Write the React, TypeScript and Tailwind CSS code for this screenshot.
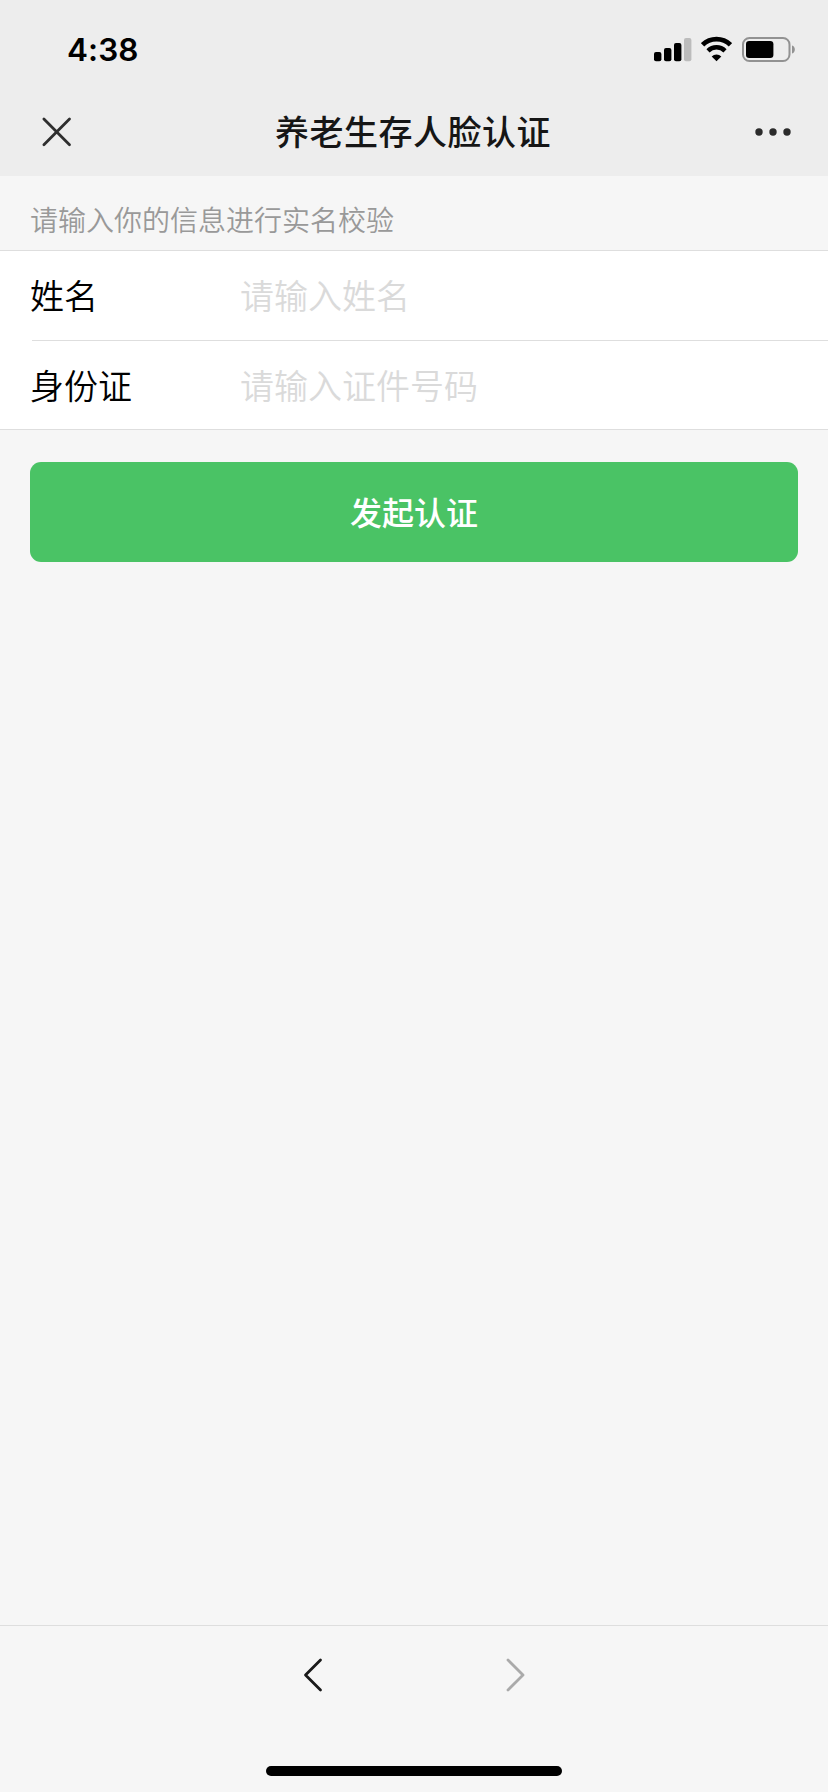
import React from "react";

interface IFormRowProps {
    label: string
    placeholder: string
    name: string
}

const StatusBar: React.FC = () => {
    return (
        <div className="flex h-[88px] items-start justify-between pl-[67px] pr-[32px]">
            <span className="pt-[31px] font-['Inter',sans-serif] text-[31.5px] leading-[38px] font-semibold tracking-[0.1px] text-black">4:38</span>
            <div className="flex items-center pt-[36px]">
                <svg width="38" height="28" viewBox="0 0 38 28">
                    <rect x="0" y="16" width="7.4" height="9.2" rx="2" fill="#000"/>
                    <rect x="10" y="12" width="7.4" height="13.2" rx="2" fill="#000"/>
                    <rect x="20" y="7" width="7.4" height="18.2" rx="2" fill="#000"/>
                    <rect x="30" y="2" width="7.4" height="23.2" rx="2" fill="#bcbcbc"/>
                </svg>
                <svg className="ml-[9px]" width="31" height="28" viewBox="0 0 31 28">
                    <path d="M1.6 8.8a20 20 0 0 1 27.8 0" fill="none" stroke="#000" strokeWidth="4.7"/>
                    <path d="M7 14.8a12.2 12.2 0 0 1 17 0" fill="none" stroke="#000" strokeWidth="4.5"/>
                    <path d="M15.5 25.2l-4.8-4.8a6.8 6.8 0 0 1 9.6 0z" fill="#000"/>
                </svg>
                <svg className="ml-[10px]" width="54" height="28" viewBox="0 0 54 28">
                    <rect x="1" y="2" width="46.5" height="23" rx="6.5" fill="none" stroke="#929292" strokeWidth="2"/>
                    <rect x="4" y="5" width="27.4" height="17" rx="3.2" fill="#000"/>
                    <path d="M50 9.5c3.8 1.1 3.8 6.9 0 8z" fill="#929292"/>
                </svg>
            </div>
        </div>
    )
}

const NavBar: React.FC = () => {
    return (
        <div className="flex h-[88px] items-center justify-between pl-[41px] pr-[36px]">
            <button aria-label="关闭">
                <svg width="31" height="31" viewBox="0 0 31 31">
                    <path d="M2.9 2.1l25.6 25.6M28.5 2.1L2.9 27.7" fill="none" stroke="#2e2e2e" strokeWidth="2.8" strokeLinecap="round"/>
                </svg>
            </button>
            <h1 className="pb-[3px] text-[34px] leading-[48px] font-medium tracking-[0.5px] text-[#161616]">养老生存人脸认证</h1>
            <button aria-label="更多">
                <svg width="38" height="10" viewBox="0 0 38 10">
                    <circle cx="5" cy="5" r="3.7" fill="#2b2b2b"/>
                    <circle cx="19" cy="5" r="3.7" fill="#2b2b2b"/>
                    <circle cx="33" cy="5" r="3.7" fill="#2b2b2b"/>
                </svg>
            </button>
        </div>
    )
}

const FormRow: React.FC<IFormRowProps> = ({ label, placeholder, name }) => {
    return (
        <label className="flex h-[88px] items-center pl-[30px]">
            <span className="w-[210px] text-[34px] leading-[48px] font-[350] text-black">{label}</span>
            <input name={name} placeholder={placeholder} className="h-[48px] flex-1 text-[34px] leading-[48px] font-[350] text-black outline-none placeholder:text-[#dadada]"/>
        </label>
    )
}

const Toolbar: React.FC = () => {
    return (
        <div className="flex h-[167px] flex-col items-center border-t border-[#dedede]">
            <div className="flex h-[98px] items-center gap-[178px]">
                <button aria-label="后退">
                    <svg width="24" height="36" viewBox="0 0 24 36">
                        <path d="M19.5 3L4.5 18l15 15" fill="none" stroke="#1a1a1a" strokeWidth="2.8" strokeLinecap="round" strokeLinejoin="round"/>
                    </svg>
                </button>
                <button aria-label="前进">
                    <svg width="24" height="36" viewBox="0 0 24 36">
                        <path d="M5 3l15 15L5 33" fill="none" stroke="#aaa" strokeWidth="2.8" strokeLinecap="round" strokeLinejoin="round"/>
                    </svg>
                </button>
            </div>
            <div className="mt-[42px] h-[10px] w-[296px] rounded-full bg-black"/>
        </div>
    )
}

const App: React.FC = () => {
    return (
        <div className="flex h-[1792px] w-[828px] flex-col bg-[#f6f6f6] font-['Noto_Sans_CJK_SC',sans-serif]">
            <header className="bg-[#ededed]">
                <StatusBar/>
                <NavBar/>
            </header>
            <main className="flex-1">
                <p className="h-[74px] pt-[23px] pl-[30px] text-[28px] leading-[40px] font-[350] text-[#999]">请输入你的信息进行实名校验</p>
                <div className="border-y border-[#dedede] bg-white">
                    <FormRow label="姓名" placeholder="请输入姓名" name="name"/>
                    <div className="mt-px ml-[32px] h-px bg-[#dedede]"/>
                    <FormRow label="身份证" placeholder="请输入证件号码" name="idCard"/>
                </div>
                <div className="px-[30px] pt-[32px]">
                    <button className="h-[100px] w-full rounded-[11px] bg-[#4ac365] pb-[3px] text-[32px] font-medium text-white">发起认证</button>
                </div>
            </main>
            <Toolbar/>
        </div>
    )
}

export default App
